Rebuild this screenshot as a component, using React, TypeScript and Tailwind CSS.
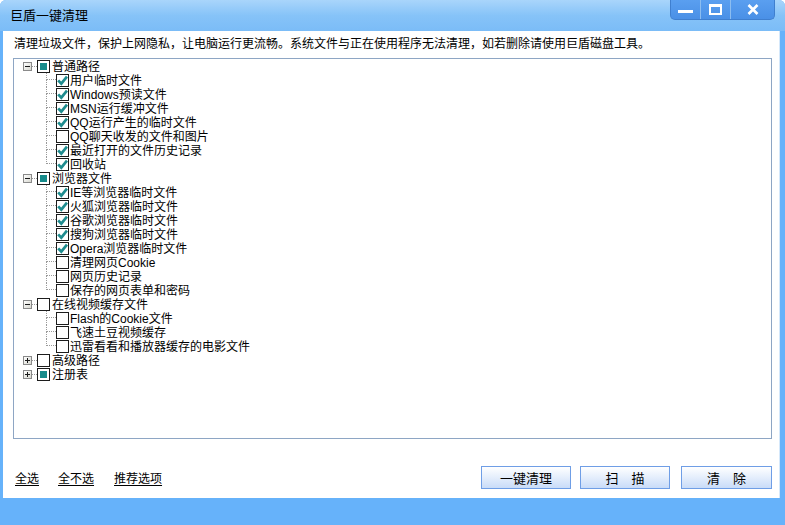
import React from "react";

type Node = { label: string; state: 0 | 1 | 2; expanded?: boolean; children?: [string, 0 | 1][] };

const groups: Node[] = [
  {
    label: "普通路径",
    state: 2,
    expanded: true,
    children: [
      ["用户临时文件", 1],
      ["Windows预读文件", 1],
      ["MSN运行缓冲文件", 1],
      ["QQ运行产生的临时文件", 1],
      ["QQ聊天收发的文件和图片", 0],
      ["最近打开的文件历史记录", 1],
      ["回收站", 1],
    ],
  },
  {
    label: "浏览器文件",
    state: 2,
    expanded: true,
    children: [
      ["IE等浏览器临时文件", 1],
      ["火狐浏览器临时文件", 1],
      ["谷歌浏览器临时文件", 1],
      ["搜狗浏览器临时文件", 1],
      ["Opera浏览器临时文件", 1],
      ["清理网页Cookie", 0],
      ["网页历史记录", 0],
      ["保存的网页表单和密码", 0],
    ],
  },
  {
    label: "在线视频缓存文件",
    state: 0,
    expanded: true,
    children: [
      ["Flash的Cookie文件", 0],
      ["飞速土豆视频缓存", 0],
      ["迅雷看看和播放器缓存的电影文件", 0],
    ],
  },
  { label: "高级路径", state: 0, expanded: false },
  { label: "注册表", state: 2, expanded: false },
];

function CheckBox({ state }: { state: 0 | 1 | 2 }) {
  return (
    <div className="w-[13px] h-[13px] shrink-0 border border-[#1c1c1c] bg-white flex items-center justify-center">
      {state === 1 && (
        <svg width="11" height="11" viewBox="0 0 11 11">
          <path d="M1.2 5.4 L4.3 8.6 L10 1.6" fill="none" stroke="#1f8c8f" strokeWidth="2.8" strokeLinejoin="miter" />
        </svg>
      )}
      {state === 2 && <div className="w-[7px] h-[7px] bg-[#168b8b]" />}
    </div>
  );
}

function Expander({ open }: { open: boolean }) {
  return (
    <div className="w-[9px] h-[9px] shrink-0 border border-[#8a8a8a] bg-gradient-to-br from-white to-[#d8d8d0] flex items-center justify-center relative">
      <div className="w-[5px] h-[1px] bg-[#1a1a1a]" />
      {!open && <div className="absolute w-[1px] h-[5px] bg-[#1a1a1a]" />}
    </div>
  );
}

const treeFont = { fontFamily: '"Liberation Sans", "Noto Sans CJK SC", sans-serif' };

export default function App() {
  return (
    <div
      className="w-[785px] h-[525px] bg-[#66b2fa] flex flex-col rounded-t-[6px] overflow-hidden text-black"
      style={{ fontFamily: '"Noto Sans CJK SC", "Noto Sans", sans-serif' }}
    >
      {/* title bar */}
      <div className="h-[31px] shrink-0 flex items-start justify-between bg-gradient-to-b from-[#a9d5fb] via-[#86c3f8] to-[#7bbcf7]">
        <div className="pl-[10px] pt-[6px] text-[13px] leading-[18px]">巨盾一键清理</div>
        <div className="mr-[10px] flex h-[20px] rounded-b-[5px] border border-t-0 border-[#3f7fcf] bg-gradient-to-b from-[#5a9ff0] to-[#4a90e6] overflow-hidden">
          <div className="w-[30px] flex items-center justify-center border-r border-[#8cbdf0]">
            <div className="w-[15px] h-[3px] bg-white mt-[4px]" />
          </div>
          <div className="w-[30px] flex items-center justify-center border-r border-[#8cbdf0]">
            <div className="w-[13px] h-[11px] border-2 border-white border-t-[3px]" />
          </div>
          <div className="w-[43px] flex items-center justify-center">
            <svg width="12" height="11" viewBox="0 0 12 11">
              <path d="M1.5 1 L10.5 10 M10.5 1 L1.5 10" stroke="white" strokeWidth="2.6" />
            </svg>
          </div>
        </div>
      </div>

      {/* body */}
      <div className="h-[467px] shrink-0 ml-[3px] mr-[5px] bg-white border-r border-[#d4e8fb] flex flex-col">
        <div className="pl-[11px] pt-[5px] text-[12px] leading-[14px] whitespace-nowrap">
          清理垃圾文件，保护上网隐私，让电脑运行更流畅。系统文件与正在使用程序无法清理，如若删除请使用巨盾磁盘工具。
        </div>

        <div
          className="mt-[8px] ml-[10px] w-[759px] h-[381px] border border-[#8ea6c4] bg-white text-[12px] leading-[14px]"
          style={treeFont}
        >
          {groups.map((g) => (
            <div key={g.label}>
              <div className="h-[14px] flex items-center">
                <div className="w-[9px] shrink-0" />
                <Expander open={!!g.expanded} />
                <div className="w-[5px] shrink-0 border-t border-dotted border-[#9a9a9a]" />
                <CheckBox state={g.state} />
                <span className="ml-[2px] whitespace-nowrap self-start pt-[1px] h-[14px]">{g.label}</span>
              </div>
              {g.expanded &&
                g.children?.map(([label, st], i) => {
                  const last = i === (g.children?.length ?? 0) - 1;
                  return (
                    <div key={label} className="h-[14px] flex items-center">
                      <div className="w-[32px] shrink-0" />
                      <div className="w-[10px] h-[14px] shrink-0 flex flex-col">
                        <div className="h-[7px] border-l border-b border-dotted border-[#9a9a9a]" />
                        <div className={"h-[7px] border-l border-dotted " + (last ? "border-transparent" : "border-[#9a9a9a]")} />
                      </div>
                      <CheckBox state={st} />
                      <span className="ml-[1px] whitespace-nowrap self-start pt-[1px] h-[14px]">{label}</span>
                    </div>
                  );
                })}
            </div>
          ))}
        </div>

        <div className="mt-[27px] flex items-center">
          <div className="flex items-center text-[12px] leading-[14px] pl-[12px] pt-[1px]">
            <span className="underline underline-offset-2">全选</span>
            <span className="underline underline-offset-2 ml-[19px]">全不选</span>
            <span className="underline underline-offset-2 ml-[20px]">推荐选项</span>
          </div>
          <div className="ml-[319px] flex items-center text-[13px]">
            <div className="w-[90px] h-[23px] border border-[#6f9ee6] bg-gradient-to-b from-white to-[#c9dcf8] flex items-center justify-center leading-[15px]">一键清理</div>
            <div className="ml-[9px] w-[90px] h-[23px] border border-[#6f9ee6] bg-gradient-to-b from-white to-[#c9dcf8] flex items-center justify-center leading-[15px] whitespace-pre">扫　描</div>
            <div className="ml-[11px] w-[91px] h-[23px] border border-[#6f9ee6] bg-gradient-to-b from-white to-[#c9dcf8] flex items-center justify-center leading-[15px] whitespace-pre">清　除</div>
          </div>
        </div>
      </div>
    </div>
  );
}
